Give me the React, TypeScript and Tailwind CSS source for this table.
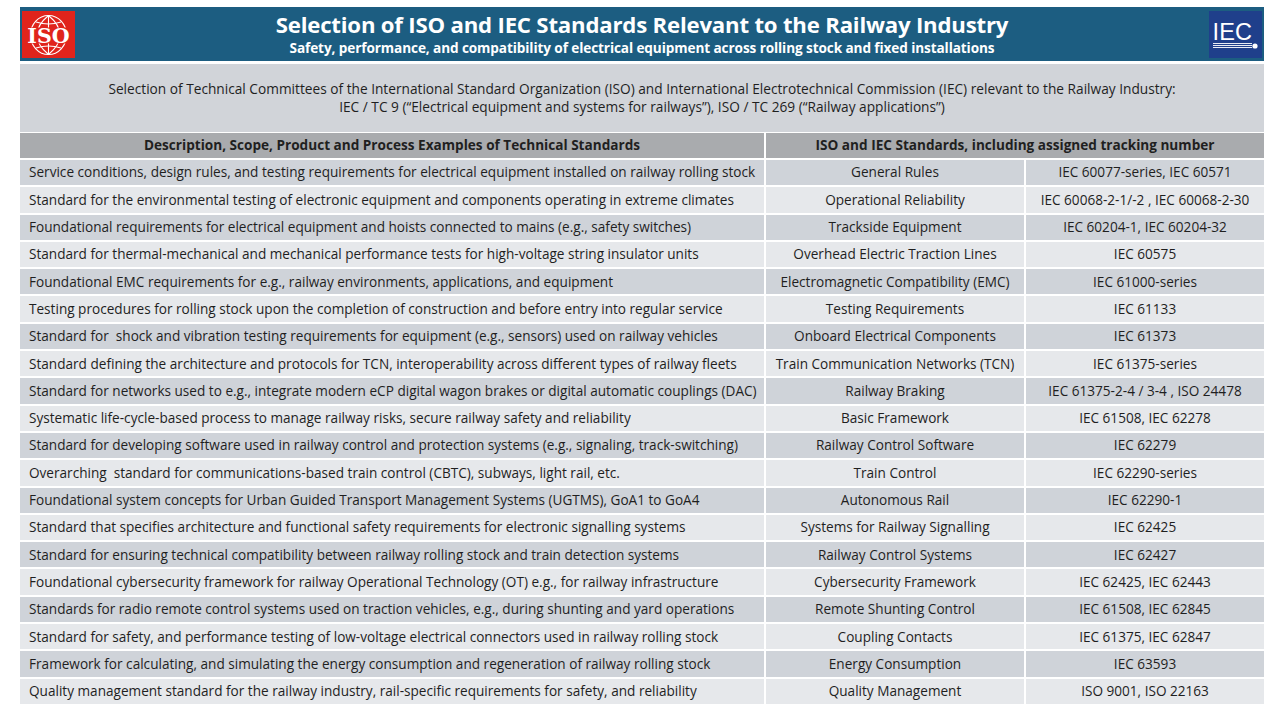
import React from "react";

const rows: [string, string, string][] = [
  ["Service conditions, design rules, and testing requirements for electrical equipment installed on railway rolling stock", "General Rules", "IEC 60077-series, IEC 60571"],
  ["Standard for the environmental testing of electronic equipment and components operating in extreme climates", "Operational Reliability", "IEC 60068-2-1/-2 , IEC 60068-2-30"],
  ["Foundational requirements for electrical equipment and hoists connected to mains (e.g., safety switches)", "Trackside Equipment", "IEC 60204-1, IEC 60204-32"],
  ["Standard for thermal-mechanical and mechanical performance tests for high-voltage string insulator units", "Overhead Electric Traction Lines", "IEC 60575"],
  ["Foundational EMC requirements for e.g., railway environments, applications, and equipment", "Electromagnetic Compatibility (EMC)", "IEC 61000-series"],
  ["Testing procedures for rolling stock upon the completion of construction and before entry into regular service", "Testing Requirements", "IEC 61133"],
  ["Standard for \u00a0shock and vibration testing requirements for equipment (e.g., sensors) used on railway vehicles", "Onboard Electrical Components", "IEC 61373"],
  ["Standard defining the architecture and protocols for TCN, interoperability across different types of railway fleets", "Train Communication Networks (TCN)", "IEC 61375-series"],
  ["Standard for networks used to e.g., integrate modern eCP digital wagon brakes or digital automatic couplings (DAC)", "Railway Braking", "IEC 61375-2-4 / 3-4 , ISO 24478"],
  ["Systematic life-cycle-based process to manage railway risks, secure railway safety and reliability", "Basic Framework", "IEC 61508, IEC 62278"],
  ["Standard for developing software used in railway control and protection systems (e.g., signaling, track-switching)", "Railway Control Software", "IEC 62279"],
  ["Overarching \u00a0standard for communications-based train control (CBTC), subways, light rail, etc.", "Train Control", "IEC 62290-series"],
  ["Foundational system concepts for Urban Guided Transport Management Systems (UGTMS), GoA1 to GoA4", "Autonomous Rail", "IEC 62290-1"],
  ["Standard that specifies architecture and functional safety requirements for electronic signalling systems", "Systems for Railway Signalling", "IEC 62425"],
  ["Standard for ensuring technical compatibility between railway rolling stock and train detection systems", "Railway Control Systems", "IEC 62427"],
  ["Foundational cybersecurity framework for railway Operational Technology (OT) e.g., for railway infrastructure", "Cybersecurity Framework", "IEC 62425, IEC 62443"],
  ["Standards for radio remote control systems used on traction vehicles, e.g., during shunting and yard operations", "Remote Shunting Control", "IEC 61508, IEC 62845"],
  ["Standard for safety, and performance testing of low-voltage electrical connectors used in railway rolling stock", "Coupling Contacts", "IEC 61375, IEC 62847"],
  ["Framework for calculating, and simulating the energy consumption and regeneration of railway rolling stock", "Energy Consumption", "IEC 63593"],
  ["Quality management standard for the railway industry, rail-specific requirements for safety, and reliability", "Quality Management", "ISO 9001, ISO 22163"],
];

function IsoLogo() {
  return (
    <svg width="53" height="47" viewBox="0 0 53 47">
      <rect width="53" height="47" fill="#e0241c" />
      <g fill="none" stroke="#fff" strokeWidth="1.1">
        <ellipse cx="26.5" cy="24" rx="18" ry="19.5" />
        <path d="M26.5 4.5 L26.5 43.5" />
        <path d="M26.5 4.5 Q15 14 15 24 Q15 34 26.5 43.5" />
        <path d="M26.5 4.5 Q38 14 38 24 Q38 34 26.5 43.5" />
        <path d="M14 11 Q26.5 15 39 11" />
        <path d="M14 37 Q26.5 33 39 37" />
      </g>
      <rect x="3" y="16.5" width="47" height="16" fill="#e0241c" />
      <text x="26.5" y="32" textAnchor="middle" fill="#fff" fontFamily="'DejaVu Serif', serif" fontWeight="bold" fontSize="20.5">ISO</text>
    </svg>
  );
}

function IecLogo() {
  return (
    <svg width="53" height="47" viewBox="0 0 53 47">
      <rect width="53" height="47" fill="#1f3f8b" />
      <text x="3.5" y="29" fill="#fff" fontFamily="'Liberation Sans', sans-serif" fontSize="23.5" letterSpacing="0.2">IEC</text>
      <g stroke="#fff" strokeWidth="0.9">
        <line x1="4" y1="32.5" x2="43" y2="32.5" />
        <line x1="4" y1="34.5" x2="43" y2="34.5" />
        <line x1="4" y1="36.5" x2="43" y2="36.5" />
      </g>
      <circle cx="46" cy="35" r="2.6" fill="#fff" />
    </svg>
  );
}

export default function App() {
  return (
    <div className="w-[1280px] h-[720px] bg-white text-[#1f1f1f] font-['Open_Sans',sans-serif] overflow-hidden">
      <div className="ml-[20px] w-[1244px] pt-[7px]">
        <div className="h-[54px] bg-[#1c5d81] flex items-center justify-between pl-[2px] pr-[2px]">
          <IsoLogo />
          <div className="flex flex-col items-center text-white">
            <div className="text-[22.2px] leading-[25px] font-bold tracking-[-0.2px]">Selection of ISO and IEC Standards Relevant to the Railway Industry</div>
            <div className="text-[13.6px] leading-[17px] font-bold mt-[2px] tracking-[-0.1px]">Safety, performance, and compatibility of electrical equipment across rolling stock and fixed installations</div>
          </div>
          <IecLogo />
        </div>
        <div className="mt-[3px] h-[68px] bg-[#d1d4d9] flex flex-col items-center justify-center text-[13.7px] leading-[18px]">
          <div>Selection of Technical Committees of the International Standard Organization (ISO) and International Electrotechnical Commission (IEC) relevant to the Railway Industry:</div>
          <div>IEC / TC 9 (“Electrical equipment and systems for railways”), ISO / TC 269 (“Railway applications”)</div>
        </div>
        <div className="mt-[1px] grid grid-cols-[744px_258px_238px] gap-[2px] text-[13.6px]">
          <div className="h-[25px] bg-[#a9abae] flex items-center justify-center font-bold text-[13.6px]">Description, Scope, Product and Process Examples of Technical Standards</div>
          <div className="col-span-2 h-[25px] bg-[#a9abae] flex items-center justify-center font-bold text-[13.6px]">ISO and IEC Standards, including assigned tracking number</div>
          {rows.map((r, i) => {
            const bg = i % 2 === 0 ? "bg-[#cfd3d9]" : "bg-[#e6e8eb]";
            return (
              <React.Fragment key={i}>
                <div className={`h-[25.3px] ${bg} flex items-center pl-[9px] whitespace-nowrap`}>{r[0]}</div>
                <div className={`h-[25.3px] ${bg} flex items-center justify-center whitespace-nowrap`}>{r[1]}</div>
                <div className={`h-[25.3px] ${bg} flex items-center justify-center whitespace-nowrap`}>{r[2]}</div>
              </React.Fragment>
            );
          })}
        </div>
      </div>
    </div>
  );
}
